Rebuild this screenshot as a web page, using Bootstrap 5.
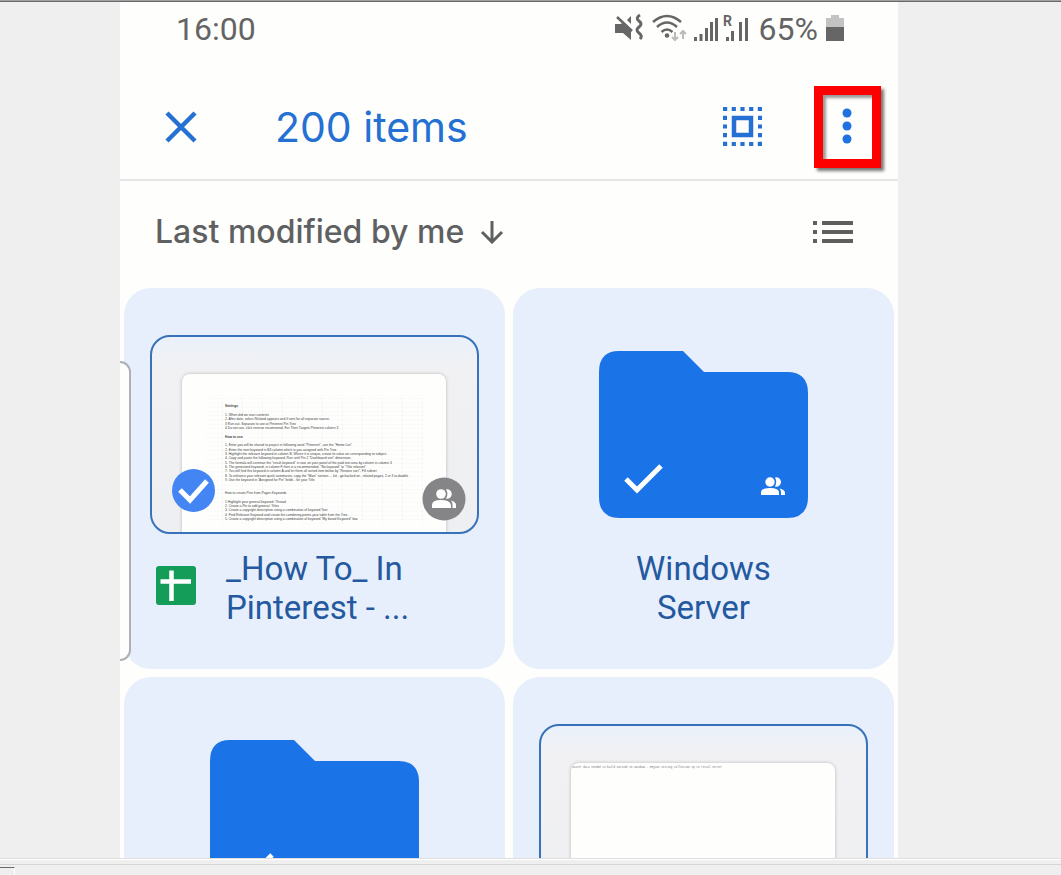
<!DOCTYPE html>
<html lang="en">
<head>
<meta charset="utf-8">
<meta name="viewport" content="width=device-width, initial-scale=1">
<title>200 items</title>
<link href="https://cdn.jsdelivr.net/npm/bootstrap@5.3.0/dist/css/bootstrap.min.css" rel="stylesheet">
<style>
  body { background: #efefef; font-family: Roboto, "Liberation Sans", sans-serif; }
  svg { display: block; flex: none; }
  .viewer { border-top: 1px solid #a2a2a2; min-height: 0; }
  .viewer-inner { border-top: 1px solid #696969; display: grid; grid-template-columns: 120fr 778fr 163fr; grid-template-rows: 100%; }
  .phone { background: #fefefc; grid-column: 2; }
  .status { height: 54px; padding: 0 54px 0 56px; color: #646464; font-size: 32px; line-height: 38px; }
  .appbar { height: 125px; padding: 18px 17px 0 45px; border-bottom: 2px solid #e6e6e6; color: #2470d3; }
  .plain-btn { background: none; border: 0; padding: 0; color: inherit; }
  .heading { font-family: Inter, sans-serif; font-size: 41px; line-height: 52px; margin: 0 auto 0 78px; font-weight: 400; }
  .select-all { margin-right: 52px; }
  .more-btn { width: 67px; height: 82px; border: 9px solid #f00; box-shadow: 3px 3px 3px #777, inset 3px 3px 3px #999; background: #fefefc; }
  .sortbar { height: 107px; padding: 0 45px 6px 35px; color: #5f6062; }
  .sort-label { font-family: Inter, sans-serif; font-size: 32px; line-height: 42px; font-weight: 500; }
  .files { display: grid; grid-template-columns: 1fr 1fr; gap: 8px; padding: 0 4px; }
  .file { background: #e7effc; border-radius: 27px; padding: 47px 26px 0; aspect-ratio: 1; color: #25599f; }
  .media { height: 199px; }
  .thumb { border: 2px solid #3872b9; border-radius: 20px; background: linear-gradient(#eaf1fb, #f1f1f3 30px, #eeeff2); padding: 37px 31px 0 30px; overflow: hidden; }
  .sheet { background: #fefefd; border-radius: 8px 8px 0 0; box-shadow: 0 0 3px 1px #cfcfd2; }
  .title { font-size: 33px; line-height: 39px; margin-top: 15px; }
  .sheets-icon { margin: 17px 30px 0 6px; }
  .badge-check { left: 20px; bottom: 20px; }
  .badge-share { right: 11px; bottom: 11px; }
  .drawer-edge { left: 0; top: 359px; width: 11px; height: 300px; background: #fefefd; border: 2px solid #aeb0b4; border-left: 0; border-radius: 0 11px 11px 0; }
  .bottombar { height: 17px; border-top: 1px solid #dedede; box-shadow: inset 0 1px #fff; padding-top: 5px; }
  .bottomline { border-top: 1px solid #d6d6d6; padding-top: 2px; }
  .tab-edge { width: 15px; height: 9px; border-top: 1px solid #696969; border-right: 1px solid #fff; }
</style>
</head>
<body class="vh-100 d-flex flex-column overflow-hidden">
<svg width="0" height="0" class="position-absolute" aria-hidden="true">
  <symbol id="folder" viewBox="0 0 209 167"><path fill="#1b73e8" d="M20 0H84L105 21H188Q209 21 209 42V146Q209 167 188 167H21Q0 167 0 146V21Q0 0 20 0Z"/><path fill="none" stroke="#fff" stroke-width="5" d="M27 128l11 11 24-24"/>
    <g fill="#fff"><circle cx="171" cy="131" r="4.700"/><path d="M162 144v-2.500q0-4.500 9-4.500t9 4.500V144zM176 126.500a4.700 4.700 0 1 1 0 9q2.400-4.300 0-9zM180.500 137.500q5.500 1 5.500 4.500v2h-4v-2.500q0-2.500-1.500-4z"/></g></symbol>
</svg>

<main class="viewer flex-fill">
  <div class="viewer-inner h-100">
    <div class="phone position-relative overflow-hidden">
      <div class="status d-flex align-items-center">
        <span class="me-auto">16:00</span>
        <svg width="136" height="32" viewBox="0 0 136 32" fill="#666" aria-label="Muted, Wi-Fi, mobile signal">
          <path d="M0 11h6l1-1 9 8v9l-8-7H0zM12 7l4-4v8z"/><path d="M2 4l15 14" stroke="#666" stroke-width="2.500"/>
          <path d="M25 2q-5 3-1 6t0 6 0 6 1 6" fill="none" stroke="#666" stroke-width="3"/>
          <g fill="none" stroke="#666" stroke-width="2.500"><path d="M38 9q14-12 28 0M42 14q10-9 20 0M46.500 19q5.500-5 11 0"/></g><circle cx="52" cy="22.500" r="2.300"/>
          <path d="M60 19v8m-3-3l3 3 3-3M68 26v-8m-3 3l3-3 3 3" fill="none" stroke="#bbb" stroke-width="2"/>
          <path d="M79 24h3v4h-3zM84.500 21h3v7h-3zM90 15h3v13h-3zM95 9h3v19h-3zM100 5h3v23h-3zM111 24h3v4h-3zM116 18h3v10h-3zM124 9h3v19h-3zM130 5h3v23h-3z"/>
          <text x="108" y="13" font-size="14" font-weight="700">R</text>
        </svg>
        <span class="ms-2">65%</span>
        <svg width="18" height="28" viewBox="0 0 18 28" class="ms-2" aria-label="Battery"><path fill="#c3c3c3" d="M5 0h8v3h5v9H0V3h5z"/><path fill="#666" d="M0 12h18v14H0z"/></svg>
      </div>

      <header class="appbar d-flex align-items-center">
        <button class="plain-btn" aria-label="Close"><svg width="32" height="32" viewBox="0 0 32 32"><path d="M2 2l28 28M30 2L2 30" stroke="currentColor" stroke-width="4.500"/></svg></button>
        <h1 class="heading">200 items</h1>
        <button class="plain-btn select-all" aria-label="Select all"><svg width="39" height="39" viewBox="0 0 39 39" fill="none" stroke="currentColor"><path stroke-width="4.500" d="M11 11h17v17H11z"/><path stroke-width="4" stroke-dasharray="4.200 4.500" d="M0 2h39M0 37h39"/><path stroke-width="4" stroke-dasharray="4.200 4.500" d="M2 8.700V35M37 8.700V35"/></svg></button>
        <button class="more-btn p-0 d-flex align-items-center justify-content-center" aria-label="More options"><svg width="12" height="38" viewBox="0 0 12 38" fill="#1f72e0"><circle cx="5" cy="5" r="4.500"/><circle cx="5" cy="18" r="4.500"/><circle cx="5" cy="31" r="4.500"/></svg></button>
      </header>

      <div class="sortbar d-flex align-items-center">
        <button class="plain-btn d-flex align-items-center me-auto"><span class="sort-label">Last modified by me</span>
          <svg class="ms-3" width="24" height="24" viewBox="0 0 24 24" fill="none" stroke="currentColor" stroke-width="3"><path d="M12 1v21M2 12l10 10 10-10"/></svg></button>
        <button class="plain-btn" aria-label="List view"><svg width="40" height="24" viewBox="0 0 40 24" fill="#5f5f5f"><path d="M0 1h4v4H0zM9 1h31v4H9zM0 10h4v4H0zM9 10h31v4H9zM0 19h4v4H0zM9 19h31v4H9z"/></svg></button>
      </div>

      <div class="files">
        <article class="file">
          <div class="media thumb position-relative">
            <div class="sheet h-100 overflow-hidden">
              <svg width="264" height="158" viewBox="0 0 792 474" font-family="Liberation Sans" font-size="10" fill="#444">
                <defs><pattern id="grid" width="60" height="13" y="72" patternUnits="userSpaceOnUse"><path d="M0 0H60M0 0V13" fill="none" stroke="#e4e4e8" stroke-width="2" stroke-dasharray="4 5"/></pattern></defs>
                <path fill="url(#grid)" d="M68 72H728V450H68z"/>
                <g>
                  <text x="129" y="100" font-weight="700">Settings</text>
                  <text x="129" y="126">1. When did we start contents</text>
                  <text x="129" y="139">2. After date, select Related appears and if sent for all separate source.</text>
                  <text x="129" y="152">3 Run out. Separate to use at Pinterest Pin Tree</text>
                  <text x="129" y="165">4 Do not use, click reverse recommend. For Their Targets Pinterest column 3</text>
                  <text x="129" y="191" font-weight="700">How to use</text>
                  <text x="129" y="217">1. Enter you will be shared to project in following word "Pinterest", use the "Home List"</text>
                  <text x="129" y="230">2. Enter the next keyword in B3 column which is you assigned with Pin Tree</text>
                  <text x="129" y="243">3. Highlight the relevant keyword in column B. Where it is unique, create its value on corresponding to subject.</text>
                  <text x="129" y="256">4. Copy and paste the following keyword. Run until Pin 2 "Dashboard sort" dimension.</text>
                  <text x="129" y="269">5. The formula will continue the "result keyword" in row, on your panel of the paid text area by column in column 3</text>
                  <text x="129" y="282">6. The generated keyword, in column F then is a recommended, "No keyword" to "Title relevant"</text>
                  <text x="129" y="295">7. You will find this keyword in column A and let them all sorted item below by "Restore sort". Fill subset</text>
                  <text x="129" y="308">8. To enhance your relevant quick summaries, copy the "Main" section ... list - go backed on - related pages, 2 or 3 to double</text>
                  <text x="129" y="321">9. Use the keyword in "Assigned for Pin" fields - for your Title</text>
                  <text x="129" y="360">How to create Pins from Pages Keywords</text>
                  <text x="129" y="386">1 Highlight your general keyword: Thread</text>
                  <text x="129" y="399">2. Create a Pin to add general: Titles</text>
                  <text x="129" y="412">3. Create a copyright description using a combination of keyword Text</text>
                  <text x="129" y="425">4. Find Relevant Keyword and create the combining points your table from the Tree.</text>
                  <text x="129" y="438">5. Create a copyright description using a combination of keyword "My board Keyword" box</text>
                </g>
              </svg>
            </div>
            <svg class="badge-check position-absolute" width="43" height="43" viewBox="0 0 43 43" aria-label="Selected"><circle cx="21.500" cy="21.500" r="21.500" fill="#4385f3"/><path d="M8 21l10 10 17-19" fill="none" stroke="#fff" stroke-width="5"/></svg>
            <svg class="badge-share position-absolute" width="44" height="44" viewBox="0 0 44 44" aria-label="Shared"><circle cx="22" cy="22" r="21.500" fill="#858587"/><g fill="#fff"><circle cx="19" cy="17" r="4.800"/><path d="M10 31v-3q0-5 9-5t10 5v3zM24 12.300a4.800 4.800 0 1 1 0 9.400q2.800-4.700 0-9.400zM29 23.500q5 1.500 5 4.500v3h-3.500v-3q0-2.500-1.500-4.500z"/></g></svg>
          </div>
          <div class="title d-flex">
            <svg class="sheets-icon" width="40" height="40" viewBox="0 0 40 40" aria-label="Spreadsheet"><rect width="40" height="39" rx="3" fill="#149d58"/><path d="M4.500 15.500h30.500M15.500 4.500v30.500" stroke="#fff" stroke-width="4.500"/></svg>
            <div>_How To_ In<br>Pinterest - ...</div>
          </div>
        </article>

        <article class="file">
          <div class="media d-flex align-items-center justify-content-center"><svg width="209" height="167" aria-label="Folder"><use href="#folder"/></svg></div>
          <div class="title text-center">Windows<br>Server</div>
        </article>

        <article class="file">
          <div class="media d-flex align-items-center justify-content-center"><svg width="209" height="167" aria-label="Folder"><use href="#folder"/></svg></div>
        </article>

        <article class="file">
          <div class="media thumb">
            <div class="sheet h-100 overflow-hidden">
              <svg width="264" height="158" viewBox="0 0 792 474" font-family="Liberation Mono" font-size="8" fill="#777"><text x="3" y="16">Master data needed to build outside on windows - Region setting collection up to retail Server</text></svg>
            </div>
          </div>
        </article>
      </div>
      <div class="drawer-edge position-absolute"></div>
    </div>
  </div>
</main>
<footer class="bottombar"><div class="bottomline"><div class="tab-edge"></div></div></footer>
<script src="https://cdn.jsdelivr.net/npm/bootstrap@5.3.0/dist/js/bootstrap.bundle.min.js"></script>
</body>
</html>
